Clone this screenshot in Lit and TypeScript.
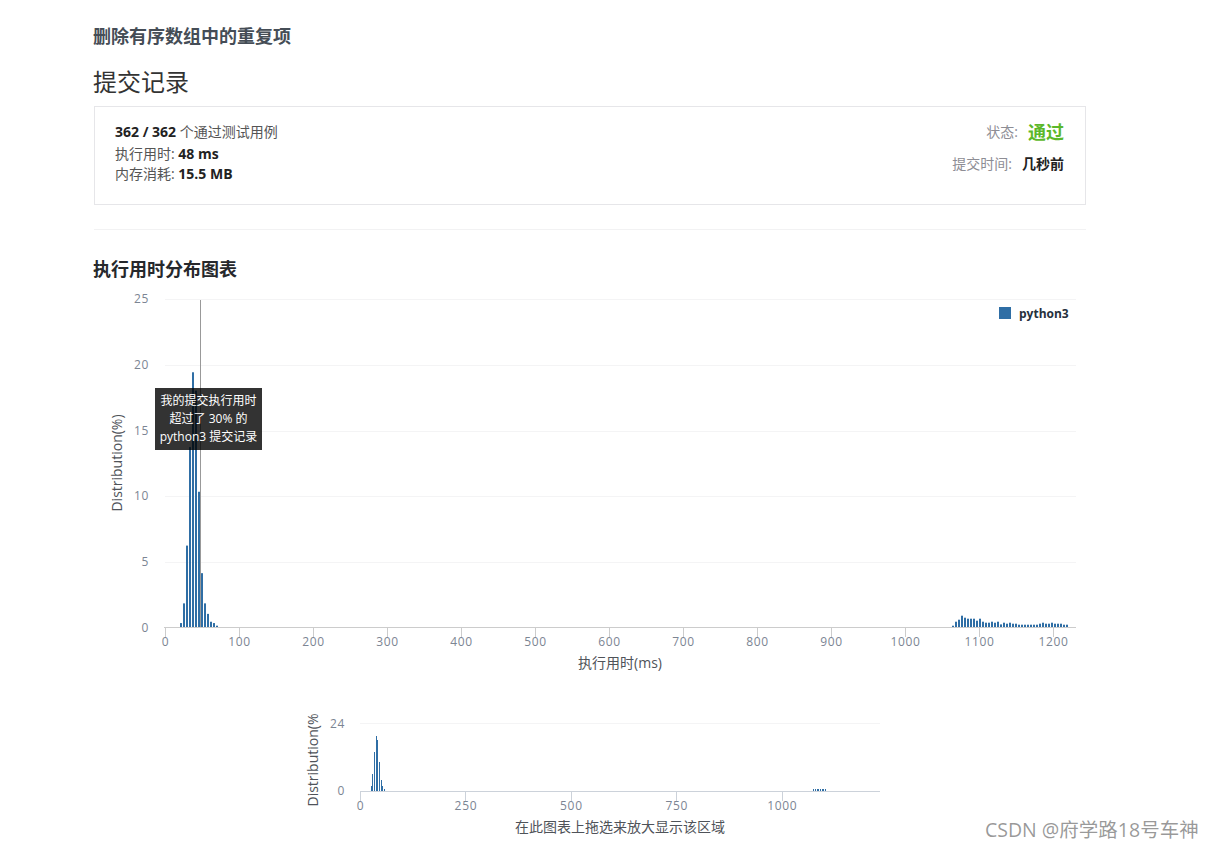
import { LitElement, html, css, svg } from "lit";
import { customElement } from "lit/decorators.js";

const BLUE = "#2f6ea5";
const UNIT = 13.13;
const Y0 = 627.5;
const MY0 = 791;
const MK = 2.82;

// left cluster of the main plot, in percent; bars sit 3px apart from x = 180
const left = [0.3, 1.8, 6.2, 13.7, 19.4, 18, 10.3, 4.1, 1.8, 1, 0.4, 0.3, 0.1];
// right cluster of the main plot, bar heights in px; 3px apart from x = 952
const right = [1.3, 5.3, 7.3, 11.3, 9.3, 8.3, 8.3, 8.3, 6.3, 8.3, 5.3, 4.3, 4.3, 5.3, 4.3, 5.3, 2.6, 4.3, 3.3, 4.3, 3.3, 3.3, 2.3, 2.3, 2.3, 2.3, 2.3, 2.3, 2.3, 3.3, 4.3, 3.3, 3.3, 4.3, 3.3, 3.3, 3.3, 2.3, 2.3];
// overview chart: [x, percent]
const miniLeft: [number, number][] = [
  [371, 1.6], [372, 6.2], [374, 13.7], [376, 19.4], [377, 18], [379, 10.3], [381, 4], [382, 1.6], [384, 0.8],
];
const miniRight = [813, 815, 817, 818, 820, 822, 823, 825];

function gridY(v: number) {
  return Math.floor(Y0 - v * UNIT + 0.5) + 0.5;
}

function mainChart() {
  const xt = Array.from({ length: 13 }, (_, i) => i * 100);
  const yt = [0, 5, 10, 15, 20, 25];
  return svg`
    ${yt.slice(1).map((v) => svg`<line x1="165" x2="1076" y1=${gridY(v)} y2=${gridY(v)} class="grid"></line>`)}
    ${yt.map((v) => svg`<text x="149" y=${Y0 - v * UNIT + 4} class="tick" text-anchor="end">${v}</text>`)}
    <line x1="164" x2="1076" y1="627.5" y2="627.5" class="axis"></line>
    ${xt.map((v) => {
      const x = Math.floor(165.3 + v * 0.74) + 0.5;
      return svg`<line x1=${x} x2=${x} y1="627" y2="637" class="axis"></line>
        <text x=${165.5 + v * 0.74} y="646" class="tick" text-anchor="middle">${v}</text>`;
    })}
    <line x1="200.5" x2="200.5" y1="300" y2="627" class="marker"></line>
    ${left.map((p, i) => {
      const h = p * UNIT;
      return svg`<rect x=${180 + i * 3} y=${627 - h} width="2" height=${h} fill=${BLUE}></rect>`;
    })}
    ${right.map((h, i) => svg`<rect x=${952 + i * 3} y=${627 - h} width="2" height=${h} fill=${BLUE}></rect>`)}
    <text x="620" y="668" class="title" text-anchor="middle">执行用时(ms)</text>
    <text transform="translate(122 463) rotate(-90)" class="title" text-anchor="middle">Distribution(%)</text>
    <rect x="999" y="307" width="12" height="12" fill=${BLUE}></rect>
    <text x="1019" y="318" class="legend">python3</text>
  `;
}

function miniChart() {
  const xt = [0, 250, 500, 750, 1000];
  return svg`
    <line x1="360" x2="880" y1="723.5" y2="723.5" class="grid"></line>
    <text x="345" y="728" class="tick" text-anchor="end">24</text>
    <text x="345" y="795" class="tick" text-anchor="end">0</text>
    <line x1="360" x2="880" y1="791.5" y2="791.5" class="miniaxis"></line>
    ${xt.map((v) => {
      const x = Math.floor(360.5 + v * 0.4218) + 0.5;
      return svg`<line x1=${x} x2=${x} y1="791" y2="801" class="miniaxis"></line>
        <text x=${360.5 + v * 0.4218} y="810" class="tick" text-anchor="middle">${v}</text>`;
    })}
    ${miniLeft.map(([x, p]) => {
      const h = Math.round(p * MK);
      return svg`<rect x=${x} y=${MY0 - h} width="1" height=${h} fill=${BLUE}></rect>`;
    })}
    ${miniRight.map((x) => svg`<rect x=${x} y=${MY0 - 2} width="1" height="2" fill=${BLUE}></rect>`)}
    <text x="620" y="832" class="title" text-anchor="middle">在此图表上拖选来放大显示该区域</text>
    <text transform="translate(318 760) rotate(-90)" class="title" text-anchor="middle">Distribution(%</text>
  `;
}

@customElement("app-root")
export class AppRoot extends LitElement {
  static styles = css`
    :host {
      display: block;
      position: relative;
      height: 849px;
      overflow: hidden;
      background: #fff;
      font-family: "Open Sans", "Noto Sans CJK SC", sans-serif;
      color: #333;
    }
    .page {
      width: 992px;
      margin-left: 94px;
      padding-top: 26px;
    }
    .problem {
      margin: 0 0 19px -1px;
      font-size: 18px;
      line-height: 20px;
      font-weight: 700;
      color: #454d56;
    }
    .heading {
      margin: 0 0 7px -1px;
      font-size: 24px;
      line-height: 34px;
      font-weight: 400;
      color: #333;
    }
    .card {
      box-sizing: border-box;
      height: 99px;
      border: 1px solid #e6e6e9;
      padding: 15px 21px 0 20px;
      display: flex;
      justify-content: space-between;
      font-size: 14px;
    }
    .stats div {
      line-height: 20px;
      color: #555;
    }
    .stats div:first-child {
      margin-bottom: 2px;
    }
    .stats b {
      color: #222;
    }
    .state {
      display: flex;
      flex-direction: column;
      align-items: flex-end;
      gap: 12px;
      margin-top: -1px;
    }
    .state div {
      display: flex;
      align-items: center;
      height: 20px;
      gap: 10px;
      color: #8d8d94;
    }
    .state b {
      color: #222;
    }
    .state .ok {
      color: #5cb82a;
      font-size: 18px;
    }
    hr {
      border: none;
      height: 1px;
      margin: 24px 0 29px;
      background: #f2f2f3;
    }
    .section {
      margin: 0 0 11px -1px;
      font-size: 18px;
      line-height: 20px;
      font-weight: 700;
      color: #26282c;
    }
    .chart {
      position: relative;
    }
    svg {
      display: block;
      width: 992px;
    }
    .main {
      height: 385px;
    }
    .mini {
      height: 130px;
      margin-top: 35px;
    }
    .grid {
      stroke: #f4f4f5;
      stroke-width: 1;
    }
    .axis {
      stroke: #ccc;
      stroke-width: 1;
    }
    .miniaxis {
      stroke: #ccd2da;
      stroke-width: 1;
    }
    .marker {
      stroke: #999;
      stroke-width: 1;
    }
    text {
      font-family: "Open Sans", "Noto Sans CJK SC", sans-serif;
    }
    .tick {
      font-size: 12px;
      letter-spacing: 0.7px;
      fill: #7c8593;
    }
    .title {
      font-size: 14px;
      fill: #4f5359;
    }
    .legend {
      font-size: 12px;
      font-weight: 700;
      fill: #26303c;
    }
    .tip {
      position: absolute;
      left: 61px;
      top: 98px;
      box-sizing: border-box;
      width: 107px;
      height: 62px;
      padding-top: 4px;
      background: rgba(0, 0, 0, 0.8);
      color: #fff;
      font-size: 12px;
      line-height: 18px;
      text-align: center;
      white-space: nowrap;
    }
    .mark {
      position: absolute;
      left: 985px;
      top: 817px;
      font-size: 19.5px;
      line-height: 26px;
      color: rgba(120, 120, 120, 0.75);
      white-space: nowrap;
    }
  `;

  render() {
    return html`
      <div class="page">
        <h4 class="problem">删除有序数组中的重复项</h4>
        <h2 class="heading">提交记录</h2>
        <div class="card">
          <div class="stats">
            <div><b>362 / 362</b> 个通过测试用例</div>
            <div>执行用时: <b>48 ms</b></div>
            <div>内存消耗: <b>15.5 MB</b></div>
          </div>
          <div class="state">
            <div>状态: <b class="ok">通过</b></div>
            <div>提交时间: <b>几秒前</b></div>
          </div>
        </div>
        <hr />
        <h3 class="section">执行用时分布图表</h3>
        <div class="chart">
          <svg class="main" viewBox="94 290 992 385">${mainChart()}</svg>
          <div class="tip">我的提交执行用时<br />超过了 30% 的<br />python3 提交记录</div>
        </div>
        <svg class="mini" viewBox="94 710 992 130">${miniChart()}</svg>
      </div>
      <div class="mark">CSDN @府学路18号车神</div>
    `;
  }
}
